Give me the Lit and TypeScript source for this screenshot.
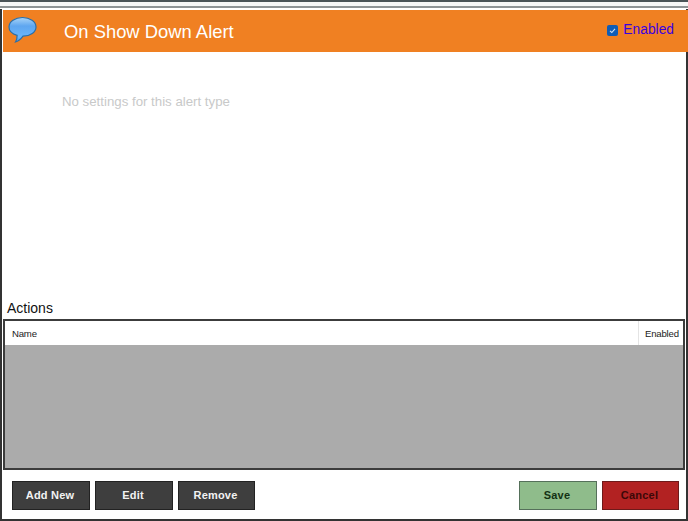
import { LitElement, html, css } from "lit";
import { customElement } from "lit/decorators.js";

@customElement("app-root")
export class AppRoot extends LitElement {
  static styles = css`
    :host { display: block; width: 688px; height: 521px; font-family: "Liberation Sans", Arial, sans-serif; }
    .win { box-sizing: border-box; width: 688px; height: 521px; background: #fff; display: flex; flex-direction: column;
      border-left: 2px solid #333; border-right: 2px solid #333; border-bottom: 2px solid #333; }
    .top { height: 9px; flex: none; margin: 0 -2px; background: linear-gradient(#4a5458 0 2px, #f6f7f7 2px 6px, #8e9496 6px 8px, #fff 8px); }
    .head { flex: none; height: 42px; margin: 1px -2px 0 1px; background: #f08022; display: flex; align-items: center; padding: 0 14px 0 5px; }
    .logo { width: 29px; height: 28px; flex: none; margin-top: -2px; }
    .title { margin-left: 27px; flex: 1; color: #fff; font-size: 18.4px; line-height: 22px; padding-top: 2px; }
    .chk { width: 11px; height: 11px; border-radius: 2px; background: #0f5cb5; display: flex; align-items: center; justify-content: center; margin: 0 5px 2px 0; }
    .en { color: #3a00e0; font-size: 13.8px; line-height: 16px; margin-bottom: 2px; }
    .body { flex: 1; padding: 42px 0 0 60px; color: #c8c9c9; font-size: 13.25px; line-height: 16px; }
    .label { flex: none; font-size: 14px; color: #111; padding-left: 5px; line-height: 17px; margin-bottom: 2px; }
    .grid { flex: none; margin: 0 1px 0 1px; height: 151px; box-sizing: border-box; border: 2px solid #3c3c3c; display: flex; flex-direction: column; background: #ababab; }
    .cols { height: 24px; background: #fff; display: flex; font-size: 9.6px; letter-spacing: -0.2px; color: #222; align-items: center; }
    .name { flex: 1; padding-left: 7px; }
    .cen { width: 45px; box-sizing: border-box; height: 100%; border-left: 1px solid #e4e4e4; display: flex; align-items: center; padding-left: 6px; }
    .foot { flex: none; height: 49px; box-sizing: border-box; display: flex; align-items: center; padding: 1px 7px 0 10px; gap: 5px; }
    .btn { box-sizing: border-box; width: 78px; height: 29px; padding-right: 2px; display: flex; align-items: center; justify-content: center; font-size: 11px; font-weight: 700; letter-spacing: 0.2px; border: 1px solid #222; }
    .narrow { width: 77px; }
    .dark { background: #3e3e3e; color: #f2f2f2; }
    .spacer { flex: 1; }
    .save { background: #8fbc8b; color: #143214; border-color: #55705a; }
    .cancel { background: #b22222; color: #3c0808; border-color: #6e1a1a; }
  `;
  render() {
    return html`<div class="win">
      <div class="top"></div>
      <div class="head">
        <svg class="logo" viewBox="0 0 29 28">
          <defs>
            <linearGradient id="g" x1="0" y1="0" x2="0" y2="1"><stop offset="0" stop-color="#a9d4f7"/><stop offset="0.35" stop-color="#5ea6f0"/><stop offset="0.8" stop-color="#6bb6fb"/><stop offset="1" stop-color="#4c95e2"/></linearGradient>
          </defs>
          <path d="M14.5 1.500C22 1.500 28 5.600 28 11c0 5.200-5.500 9-13 9.200C13 23 10 25.500 7.500 26c1.200-1.800 1.700-4 1.600-6.700C4 17.800 1 14.800 1 11 1 5.600 7 1.500 14.500 1.500Z" fill="url(#g)" stroke="#2a6ea8" stroke-width="1.200"/>
        </svg>
        <div class="title">On Show Down Alert</div>
        <div class="chk"><svg width="9" height="9" viewBox="0 0 9 9"><path d="M2 4.800l1.800 1.700L7 2.800" fill="none" stroke="#cfe2f5" stroke-width="1.100"/></svg></div>
        <div class="en">Enabled</div>
      </div>
      <div class="body">No settings for this alert type</div>
      <div class="label">Actions</div>
      <div class="grid">
        <div class="cols"><div class="name">Name</div><div class="cen">Enabled</div></div>
      </div>
      <div class="foot">
        <div class="btn dark">Add New</div>
        <div class="btn dark">Edit</div>
        <div class="btn dark narrow">Remove</div>
        <div class="spacer"></div>
        <div class="btn save">Save</div>
        <div class="btn cancel narrow">Cancel</div>
      </div>
    </div>`;
  }
}
